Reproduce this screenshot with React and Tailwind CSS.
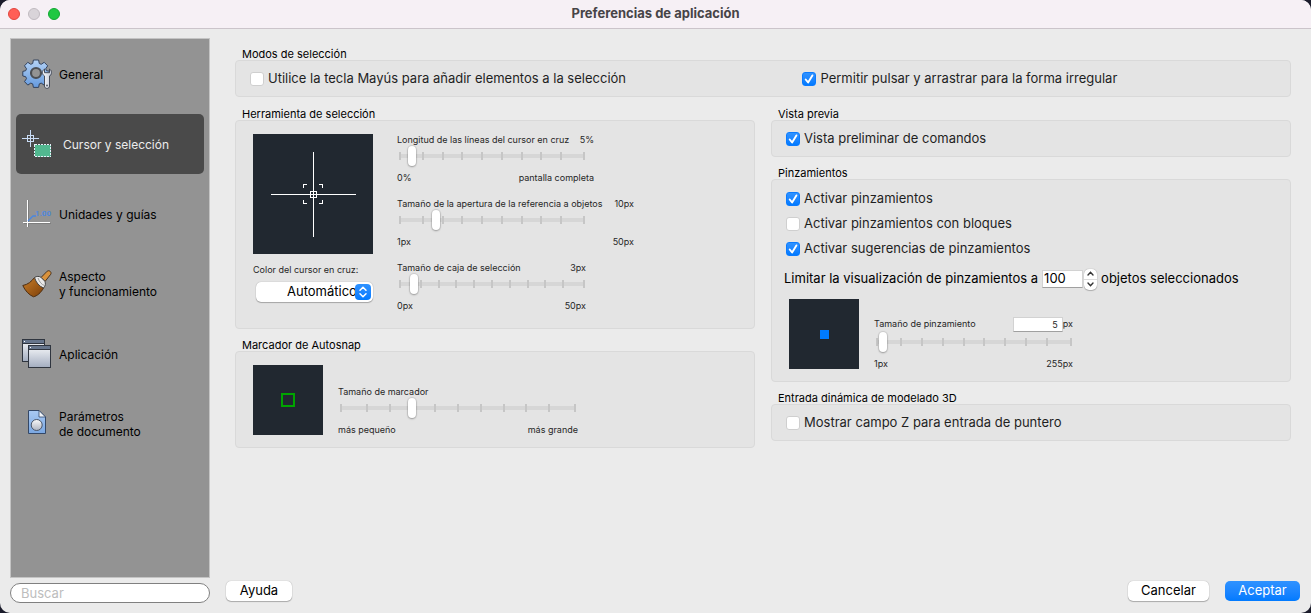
import React, { useState } from "react";

const GearIcon = () => (
  <svg width="30" height="32" viewBox="0 0 30 32" className="shrink-0">
    <defs>
      <linearGradient id="gear" x1="0" y1="0" x2="0" y2="1">
        <stop offset="0" stopColor="#b4d2f5" />
        <stop offset="1" stopColor="#659ade" />
      </linearGradient>
      <linearGradient id="steel" x1="0" y1="0" x2="1" y2="0">
        <stop offset="0" stopColor="#fafbfd" />
        <stop offset="1" stopColor="#c3c9d6" />
      </linearGradient>
    </defs>
    <g stroke="#33425c" strokeLinejoin="round">
      <path
        fill="url(#gear)"
        d="M11.4 2h5.2l.7 3.5 1.9.8 3-2 3.5 3.5-2 3 .8 1.9 3.500.7v4.600l-3.500.7-.8 1.900 2 3-3.500 3.500-3-2-1.900.8-.7 3.500h-5.200l-.7-3.500-1.900-.8-3 2-3.300-3.500 2-3-.8-1.900L.8 18v-4.600l2.900-.7.8-1.900-2-3 3.300-3.500 3 2 1.900-.8z"
      />
      <circle cx="14" cy="15" r="5" fill="#939393" stroke="#4c4f55" strokeWidth="2.200" />
      <path
        fill="url(#steel)"
        stroke="#454b58"
        d="M22.500 11c-1.500.9-2 2.300-2 3.500 0 1.700.8 2.700 2 3.500v10c0 3.200 5 3.200 5 0v-10c1.200-.8 2-1.800 2-3.500 0-1.200-.5-2.600-2-3.500v3.700h-5z"
      />
    </g>
    <circle cx="25" cy="27.600" r="1" fill="#5a606c" />
  </svg>
);

const CursorIcon = () => (
  <svg width="30" height="30" viewBox="0 0 30 30" className="shrink-0" shapeRendering="crispEdges">
    <path d="M0 9.5h17M8.5 1v17" stroke="#c9dcf5" />
    <rect x="5.5" y="6.5" width="6" height="6" fill="none" stroke="#c9dcf5" />
    <rect x="12.5" y="15.5" width="16" height="12" fill="#52b890" />
    <rect x="12.5" y="15.5" width="16" height="12" fill="none" stroke="#e6f0fa" strokeDasharray="2 1" />
  </svg>
);

const UnitsIcon = () => (
  <svg width="30" height="30" viewBox="0 0 30 30" className="shrink-0">
    <path d="M6.5 1v27M2 24.5h27" stroke="#6f6f6f" opacity=".6" />
    <path d="M5.5 1v27M1 23.5h27" stroke="#fff" />
    <path d="M6 22l5-5h3" stroke="#4a86e0" fill="none" strokeWidth="1.3" />
    <text x="13" y="17" fontSize="8" fontWeight="600" fontFamily="Roboto, sans-serif" fill="#4a86e0">1.00</text>
  </svg>
);

const BrushIcon = () => (
  <svg width="30" height="30" viewBox="0 0 30 30" className="shrink-0">
    <defs>
      <linearGradient id="bristle" x1="0" y1="0" x2="1" y2="1">
        <stop offset="0" stopColor="#c97f2a" />
        <stop offset="1" stopColor="#7c3e08" />
      </linearGradient>
    </defs>
    <path d="M19 8.5l6.2-6.3c1.8-1.5 4.7.7 3.6 3L23 12.5z" fill="#d9923c" stroke="#4a3420" />
    <path d="M12.5 8.5C9.5 12.5 6 15.5.8 16.5c2.2 5 6.2 9.5 10.7 11.3 3.5-.8 7.5-4 10-8.800z" fill="url(#bristle)" stroke="#4d2d10" />
    <path d="M12.5 8.5c2.200-1.500 4.600-1.300 6.300-.3l4 4c1 2.200.8 4.600-1.300 6.800-4.500-1.800-7.500-5.500-9-10.500z" fill="#e8e8e8" stroke="#444" />
    <path d="M16 9c1.500 4 3.500 6.500 6.500 7.500" stroke="#9c9c9c" fill="none" />
  </svg>
);

const WindowsIcon = () => (
  <svg width="30" height="30" viewBox="0 0 30 30" className="shrink-0">
    <defs>
      <linearGradient id="pane" x1="0" y1="0" x2="0" y2="1">
        <stop offset="0" stopColor="#f7f8fa" />
        <stop offset="1" stopColor="#a3adc0" />
      </linearGradient>
    </defs>
    <g stroke="#2f353f">
      <rect x=".5" y=".5" width="22" height="22" fill="url(#pane)" />
      <rect x=".5" y=".5" width="22" height="4" fill="#66758c" />
      <rect x="6.5" y="6.5" width="22" height="22" fill="url(#pane)" />
      <rect x="6.5" y="6.5" width="22" height="4" fill="#66758c" />
    </g>
    <path d="M2 2.5h1M8 8.5h1" stroke="#fff" />
  </svg>
);

const DocumentIcon = () => (
  <svg width="30" height="30" viewBox="0 0 30 30" className="shrink-0">
    <defs>
      <linearGradient id="sheet" x1="0" y1="0" x2="0" y2="1">
        <stop offset="0" stopColor="#a9c9f2" />
        <stop offset="1" stopColor="#7aa7e2" />
      </linearGradient>
      <linearGradient id="ball" x1="0" y1="0" x2="0" y2="1">
        <stop offset="0" stopColor="#fafafa" />
        <stop offset="1" stopColor="#adb3c0" />
      </linearGradient>
    </defs>
    <path d="M6.5 1.5H17l6.500 6.500v16.500h-17z" fill="url(#sheet)" stroke="#344867" />
    <path d="M17 1.5V8h6.500z" fill="#f2f5fa" stroke="#344867" strokeWidth=".8" />
    <circle cx="14.7" cy="16" r="5.5" fill="url(#ball)" stroke="#4a5568" />
  </svg>
);

const sections = [
  { lines: ["General"], Icon: GearIcon },
  { lines: ["Cursor y selección"], Icon: CursorIcon, active: true },
  { lines: ["Unidades y guías"], Icon: UnitsIcon },
  { lines: ["Aspecto", "y funcionamiento"], Icon: BrushIcon },
  { lines: ["Aplicación"], Icon: WindowsIcon },
  { lines: ["Parámetros", "de documento"], Icon: DocumentIcon },
];

const Group = ({ title, className = "", children }) => (
  <section>
    <h2 className="pl-[7px] text-[11px] leading-3 text-black">{title}</h2>
    <div className={`rounded-[4px] border border-[#d9d9d9] bg-[#e4e4e4] ${className}`}>{children}</div>
  </section>
);

const Check = ({ label, defaultChecked = false, className = "h-[25px]" }) => (
  <label className={`flex items-center gap-1 text-[13px] text-[#1f1f1f] ${className}`}>
    <span className="relative flex size-[14px] shrink-0">
      <input
        type="checkbox"
        defaultChecked={defaultChecked}
        className="peer size-[14px] appearance-none rounded-[3px] border border-[#cfcfcf] bg-white checked:border-[#0a7bff] checked:bg-linear-to-b checked:from-[#2f92ff] checked:to-[#007aff]"
      />
      <svg viewBox="0 0 14 14" className="pointer-events-none absolute inset-0 hidden peer-checked:block">
        <path d="M3.7 7.5l2.4 2.9 4.3-7" fill="none" stroke="#fff" strokeWidth="1.9" strokeLinecap="round" strokeLinejoin="round" />
      </svg>
    </span>
    {label}
  </label>
);

const Slider = ({ label, ticks, className, ...props }) => (
  <div className={`relative ml-0.5 flex h-5 items-center ${className}`}>
    <div className="h-1 w-full bg-[#d6d6d6]" />
    <div className="absolute inset-x-0 flex justify-between">
      {Array.from({ length: ticks }, (_, i) => (
        <span key={i} className="h-2 w-0.5 bg-[#c6c6c6] first:mr-[3px] last:ml-[3px]" />
      ))}
    </div>
    <input
      type="range"
      aria-label={label}
      className="absolute inset-0 m-0 w-full appearance-none bg-transparent [&::-webkit-slider-thumb]:h-5 [&::-webkit-slider-thumb]:w-2 [&::-webkit-slider-thumb]:appearance-none [&::-webkit-slider-thumb]:rounded-full [&::-webkit-slider-thumb]:bg-white [&::-webkit-slider-thumb]:shadow-[0_0_1px_1px_rgba(0,0,0,0.1),0_1px_2px_rgba(0,0,0,0.25)]"
      {...props}
    />
  </div>
);

const SliderField = ({ label, value, low, high, className = "min-w-[189px]", sliderClass = "w-[186px]", ...props }) => (
  <div className={`w-fit text-[9px] leading-3 text-[#262626] ${className}`}>
    <div className="flex items-center justify-between">
      <span>{label}</span>
      {value}
    </div>
    <Slider label={label} className={sliderClass} {...props} />
    <div className="mt-1.5 flex justify-between">
      <span>{low}</span>
      <span>{high}</span>
    </div>
  </div>
);

const CrosshairPreview = () => (
  <svg width="120" height="120" viewBox="0 0 120 120" className="bg-[#212830]" shapeRendering="crispEdges">
    <g fill="none" stroke="#fff">
      <path d="M18 60.5h85M60.5 18v85" />
      <rect x="57.5" y="57.5" width="6" height="6" />
      <path d="M50.5 54v-3.5h3.5M66 50.5h3.5v3.5M69.5 66v3.5h-3.5M54 69.5h-3.5v-3.5" />
    </g>
  </svg>
);

const App = () => {
  const [limit, setLimit] = useState(100);

  return (
    <div className="bg-[#1b1c2b]">
      <div className="flex min-h-screen flex-col overflow-hidden rounded-[10px] bg-[#ebebeb] font-[Inter,sans-serif]">
        <header className="relative flex h-[29px] items-center justify-center border-b border-[#cbc4ca] bg-[#f6f0f5]">
          <div className="absolute left-2 flex gap-2">
            <button aria-label="Cerrar" className="size-3 rounded-full border border-[#e2463f] bg-[#ff5f57]" />
            <button aria-label="Minimizar" className="size-3 rounded-full border border-[#c0bac0] bg-[#d9d4d9]" />
            <button aria-label="Ampliar" className="size-3 rounded-full border border-[#12a832] bg-[#1fc842]" />
          </div>
          <h1 className="text-[13px] font-bold text-[#474447]">Preferencias de aplicación</h1>
        </header>

        <div className="flex flex-1">
          <aside className="my-[9px] mb-2.5 ml-2.5 flex w-[200px] shrink-0 flex-col gap-[5px]">
            <nav className="flex flex-1 flex-col gap-2.5 border border-[#c4c4c4] bg-[#939393] p-[5px]">
              {sections.map(({ lines, Icon, active }) => (
                <a
                  key={lines[0]}
                  href="#"
                  className={`flex h-[60px] items-center rounded-[5px] pl-1.5 text-[12px] leading-[15px] ${
                    active ? "gap-[11px] bg-[#4a4a4a] text-[#ececec]" : "gap-[7px] text-black"
                  }`}
                >
                  <Icon />
                  <span>
                    {lines.map((line) => (
                      <span key={line} className="block">{line}</span>
                    ))}
                  </span>
                </a>
              ))}
            </nav>
            <input
              type="search"
              aria-label="Buscar"
              placeholder="Buscar"
              className="h-5 w-full rounded-full border border-[#808080] bg-white px-2.5 text-[13px] placeholder:text-[#bdbdbd]"
            />
          </aside>

          <div className="flex min-w-0 flex-1 flex-col">
            <main className="flex flex-1 flex-col gap-[11px] pt-[19px] pr-5 pl-[25px]">
              <Group title="Modos de selección" className="grid grid-cols-[7fr_6fr] px-3.5">
                <Check label="Utilice la tecla Mayús para añadir elementos a la selección" className="h-[35px]" />
                <Check label="Permitir pulsar y arrastrar para la forma irregular" className="h-[35px]" defaultChecked />
              </Group>

              <div className="grid grid-cols-2 items-start gap-4">
                <div className="flex flex-col gap-2.5">
                  <Group title="Herramienta de selección" className="flex gap-6 px-[17px] pt-[13px] pb-4">
                    <div className="w-[120px]">
                      <CrosshairPreview />
                      <label htmlFor="color" className="mt-2.5 block text-[9px] leading-3 text-[#262626]">
                        Color del cursor en cruz:
                      </label>
                      <div className="relative mt-1.5 ml-[3px]">
                        <select
                          id="color"
                          className="block h-5 w-full appearance-none rounded-[5px] bg-white pr-4 pl-[31px] text-[13px] text-black shadow-[0_0_1px_rgba(0,0,0,0.35),0_1px_1px_rgba(0,0,0,0.25)]"
                        >
                          <option>Automático</option>
                        </select>
                        <svg
                          viewBox="0 0 16 16"
                          className="pointer-events-none absolute top-0.5 right-0.5 size-4 rounded-[4px] bg-linear-to-b from-[#2f92ff] to-[#007aff]"
                        >
                          <path d="M5 6.3l3-3 3 3M5 9.7l3 3 3-3" fill="none" stroke="#fff" strokeWidth="1.5" strokeLinecap="round" strokeLinejoin="round" />
                        </svg>
                      </div>
                    </div>
                    <div className="flex flex-col gap-3.5">
                      <SliderField
                        label="Longitud de las líneas del cursor en cruz"
                        value="5%"
                        low="0%"
                        high="pantalla completa"
                        ticks={10}
                        min={0}
                        max={100}
                        defaultValue={5}
                        className="min-w-[197px]"
                      />
                      <SliderField
                        label="Tamaño de la apertura de la referencia a objetos"
                        value="10px"
                        low="1px"
                        high="50px"
                        ticks={10}
                        min={1}
                        max={50}
                        defaultValue={10}
                        className="min-w-[237px]"
                      />
                      <SliderField
                        label="Tamaño de caja de selección"
                        value="3px"
                        low="0px"
                        high="50px"
                        ticks={11}
                        min={0}
                        max={50}
                        defaultValue={3}
                      />
                    </div>
                  </Group>

                  <Group title="Marcador de Autosnap" className="flex gap-[15px] px-[17px] pt-[13px] pb-[11px]">
                    <div className="flex size-[70px] items-center justify-center bg-[#212830]">
                      <span className="size-3.5 border-2 border-[#00a500]" />
                    </div>
                    <SliderField
                      label="Tamaño de marcador"
                      low="más pequeño"
                      high="más grande"
                      ticks={11}
                      min={0}
                      max={10}
                      defaultValue={3}
                      className="min-w-[240px] pt-[21px]"
                      sliderClass="w-[236px]"
                    />
                  </Group>
                </div>

                <div className="flex flex-col gap-2.5">
                  <Group title="Vista previa" className="px-3.5">
                    <Check label="Vista preliminar de comandos" className="h-[35px]" defaultChecked />
                  </Group>

                  <Group title="Pinzamientos" className="px-3.5 pt-1.5 pb-[11px]">
                    <Check label="Activar pinzamientos" defaultChecked />
                    <Check label="Activar pinzamientos con bloques" />
                    <Check label="Activar sugerencias de pinzamientos" defaultChecked />
                    <div className="-ml-0.5 mt-[7px] flex h-[22px] items-center text-[13px] text-black">
                      <label htmlFor="limit">Limitar la visualización de pinzamientos a</label>
                      <input
                        id="limit"
                        value={limit}
                        onChange={(e) => setLimit(Number(e.target.value) || 0)}
                        className="ml-1 h-[18px] w-[41px] border border-[#d2d2d2] border-b-[#a0a0a0] bg-white px-px text-[13px]"
                      />
                      <span className="ml-px flex h-[21px] w-[13px] flex-col overflow-hidden rounded-[5px] bg-white shadow-[0_0_1px_rgba(0,0,0,0.4),0_1px_1px_rgba(0,0,0,0.2)]">
                        <button aria-label="Aumentar" onClick={() => setLimit(limit + 1)} className="flex flex-1 items-center justify-center border-b border-[#dcdcdc]">
                          <svg width="7" height="5" viewBox="0 0 7 5"><path d="M1 4l2.5-2.7L6 4" fill="none" stroke="#333" strokeWidth="1.4" strokeLinecap="round" /></svg>
                        </button>
                        <button aria-label="Reducir" onClick={() => setLimit(limit - 1)} className="flex flex-1 items-center justify-center">
                          <svg width="7" height="5" viewBox="0 0 7 5"><path d="M1 1l2.5 2.7L6 1" fill="none" stroke="#333" strokeWidth="1.4" strokeLinecap="round" /></svg>
                        </button>
                      </span>
                      <span className="ml-1">objetos seleccionados</span>
                    </div>
                    <div className="mt-[9px] ml-[3px] flex gap-[15px]">
                      <div className="flex size-[70px] items-center justify-center bg-[#212830]">
                        <span className="size-[9px] bg-[#007bff]" />
                      </div>
                      <SliderField
                        label="Tamaño de pinzamiento"
                        value={
                          <span className="flex h-4 items-center">
                            <input
                              aria-label="Tamaño de pinzamiento en px"
                              defaultValue="5"
                              className="h-[15px] w-[50px] border border-[#d2d2d2] border-b-[#a0a0a0] bg-white pr-1 text-right text-[9px]"
                            />
                            px
                          </span>
                        }
                        low="1px"
                        high="255px"
                        ticks={10}
                        min={1}
                        max={255}
                        defaultValue={5}
                        className="min-w-[199px] pt-[17px]"
                        sliderClass="w-[196px]"
                      />
                    </div>
                  </Group>

                  <Group title="Entrada dinámica de modelado 3D" className="px-3.5">
                    <Check label="Mostrar campo Z para entrada de puntero" className="h-[35px]" />
                  </Group>
                </div>
              </div>
            </main>

            <footer className="flex items-center gap-4 pr-[11px] pb-3 pl-4 text-[13px] text-black">
              <button className="mr-auto h-5 w-[66px] rounded-[5px] bg-white shadow-[0_0_1px_rgba(0,0,0,0.35),0_1px_1px_rgba(0,0,0,0.25)]">Ayuda</button>
              <button className="h-5 w-[81px] rounded-[5px] bg-white shadow-[0_0_1px_rgba(0,0,0,0.35),0_1px_1px_rgba(0,0,0,0.25)]">Cancelar</button>
              <button className="h-5 w-[75px] rounded-[5px] bg-linear-to-b from-[#2f92ff] to-[#007aff] text-white">Aceptar</button>
            </footer>
          </div>
        </div>
      </div>
    </div>
  );
};

export default App;
